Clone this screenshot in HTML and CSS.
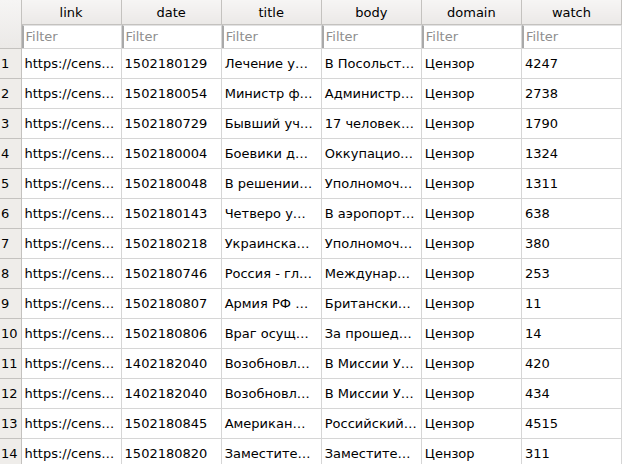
FILE: index.html
```html
<!DOCTYPE html>
<html lang="ru">
<head>
  <meta charset="UTF-8" />
  <title>censor</title>
  <link rel="stylesheet" href="styles.css">
</head>
<body>
  <table class="grid">
    <colgroup>
      <col class="col-num">
      <col span="6" class="col-data">
    </colgroup>
    <thead>
      <tr class="head-row">
        <th class="corner" rowspan="2"></th>
        <th>link</th>
        <th>date</th>
        <th>title</th>
        <th>body</th>
        <th>domain</th>
        <th>watch</th>
      </tr>
      <tr class="filter-row">
        <td><div class="filter">Filter</div></td>
        <td><div class="filter">Filter</div></td>
        <td><div class="filter">Filter</div></td>
        <td><div class="filter">Filter</div></td>
        <td><div class="filter">Filter</div></td>
        <td><div class="filter">Filter</div></td>
      </tr>
    </thead>
    <tbody>
      <tr><th>1</th><td>https://cens…</td><td>1502180129</td><td>Лечение у…</td><td>В Посольст…</td><td>Цензор</td><td>4247</td></tr>
      <tr><th>2</th><td>https://cens…</td><td>1502180054</td><td>Министр ф…</td><td>Администр…</td><td>Цензор</td><td>2738</td></tr>
      <tr><th>3</th><td>https://cens…</td><td>1502180729</td><td>Бывший уч…</td><td>17 человек…</td><td>Цензор</td><td>1790</td></tr>
      <tr><th>4</th><td>https://cens…</td><td>1502180004</td><td>Боевики д…</td><td>Оккупацио…</td><td>Цензор</td><td>1324</td></tr>
      <tr><th>5</th><td>https://cens…</td><td>1502180048</td><td>В решении…</td><td>Уполномоч…</td><td>Цензор</td><td>1311</td></tr>
      <tr><th>6</th><td>https://cens…</td><td>1502180143</td><td>Четверо у…</td><td>В аэропорт…</td><td>Цензор</td><td>638</td></tr>
      <tr><th>7</th><td>https://cens…</td><td>1502180218</td><td>Украинска…</td><td>Уполномоч…</td><td>Цензор</td><td>380</td></tr>
      <tr><th>8</th><td>https://cens…</td><td>1502180746</td><td>Россия - гл…</td><td>Междунар…</td><td>Цензор</td><td>253</td></tr>
      <tr><th>9</th><td>https://cens…</td><td>1502180807</td><td>Армия РФ …</td><td>Британски…</td><td>Цензор</td><td>11</td></tr>
      <tr><th>10</th><td>https://cens…</td><td>1502180806</td><td>Враг осущ…</td><td>За прошед…</td><td>Цензор</td><td>14</td></tr>
      <tr><th>11</th><td>https://cens…</td><td>1402182040</td><td>Возобновл…</td><td>В Миссии У…</td><td>Цензор</td><td>420</td></tr>
      <tr><th>12</th><td>https://cens…</td><td>1402182040</td><td>Возобновл…</td><td>В Миссии У…</td><td>Цензор</td><td>434</td></tr>
      <tr><th>13</th><td>https://cens…</td><td>1502180845</td><td>Американ…</td><td>Российский…</td><td>Цензор</td><td>4515</td></tr>
      <tr><th>14</th><td>https://cens…</td><td>1502180820</td><td>Заместите…</td><td>Заместите…</td><td>Цензор</td><td>311</td></tr>
    </tbody>
  </table>
</body>
</html>
```

FILE: styles.css
```css
:root {
  --font-main: "DejaVu Sans", sans-serif;
  --grid-line: #d6d6d6;
  --head-line: #c4c2bf;
}

body {
  margin: 0;
  background: #fff;
  font-family: var(--font-main);
  font-size: 13px;
  color: #000;
  overflow: hidden;
}

/* table view */
.grid {
  border-collapse: collapse;
  table-layout: fixed;
  width: 622px;
}

.col-num { width: 21px; }
.col-data { width: 100px; }

.grid td,
.grid th {
  padding: 0;
  white-space: nowrap;
}

/* column headers */
.grid .head-row th {
  height: 24px;
  font-weight: normal;
  text-align: center;
  background: linear-gradient(#f6f5f4, #ebe9e7);
  border-right: 1px solid var(--head-line);
  border-bottom: 1px solid var(--head-line);
}

.grid .corner {
  background: linear-gradient(#f6f5f4, #eceae7);
  border-right: 1px solid var(--head-line);
  border-bottom: 1px solid var(--head-line);
}

/* filter line */
.grid .filter-row td {
  height: 23px;
  border-right: 1px solid var(--grid-line);
  border-bottom: 1px solid var(--grid-line);
}

.filter {
  height: 22px;
  line-height: 22px;
  padding-left: 2px;
  border-top: 1px solid #e2e2e2;
  border-left: 2px solid #a9a9a9;
  color: #8e8e8e;
  background: #fff;
}

/* data rows */
.grid tbody tr {
  height: 30px;
}

.grid tbody th {
  font-weight: normal;
  text-align: left;
  padding-left: 1px;
  background: #efedea;
  border-right: 1px solid var(--head-line);
  border-bottom: 1px solid var(--head-line);
}

.grid tbody td {
  padding-left: 3px;
  border-right: 1px solid var(--grid-line);
  border-bottom: 1px solid var(--grid-line);
}
```
